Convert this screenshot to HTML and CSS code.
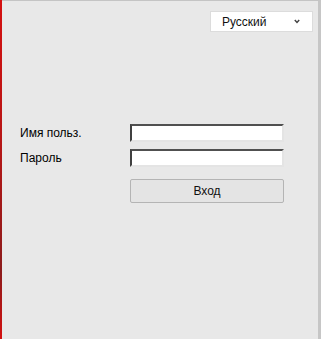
FILE: index.html
```html
<!DOCTYPE html>
<html lang="ru">
<head>
    <meta charset="UTF-8">
    <meta name="viewport" content="width=device-width, initial-scale=1.0">
    <title>Вход</title>
    <link rel="stylesheet" href="styles.css">
</head>
<body>
    <div class="frame">
        <div class="edge"></div>
        <div class="page">
            <div class="lang-bar">
                <div class="lang-select">
                    <span>Русский</span>
                    <svg class="chevron" width="6" height="5" viewBox="0 0 6 5">
                        <path d="M0.8 1 L3 3.4 L5.2 1" fill="none" stroke="#444" stroke-width="1.5"/>
                    </svg>
                </div>
            </div>

            <div class="login">
                <label for="user">Имя польз.</label>
                <input type="text" id="user" class="field">
                <label for="pass">Пароль</label>
                <input type="password" id="pass" class="field">
                <span></span>
                <button class="login-btn">Вход</button>
            </div>
        </div>
    </div>
</body>
</html>
```

FILE: styles.css
```css
body {
    margin: 0;
    font-family: 'Liberation Sans', Arial, sans-serif;
    font-size: 12px;
    color: #000;
    background: #e8e8e8;
}
.frame {
    display: flex;
    height: 339px;
}
.edge {
    width: 2px;
    background: linear-gradient(to bottom, #d41010 0%, #b81616 40%, #8c1c1c 80%, #d41010 100%);
}
.page {
    flex: 1;
    background: #e8e8e8;
    border-top: 1px solid #c4c4c4;
    border-right: 3px solid #c6c6c6;
}
.lang-bar {
    display: flex;
    justify-content: flex-end;
    padding: 10px 5px 0 0;
}
.lang-select {
    width: 103px;
    height: 21px;
    box-sizing: border-box;
    background: white;
    border: 1px solid #dcdcdc;
    display: flex;
    align-items: center;
    justify-content: space-between;
    padding: 0 12px 0 11px;
    font-size: 12px;
    color: #111;
}
.chevron {
    display: block;
}
.login {
    display: grid;
    grid-template-columns: 110px 154px;
    row-gap: 7px;
    align-items: center;
    margin: 92px 0 0 18px;
}
.login label {
    font-size: 12px;
}
.field {
    height: 18px;
    box-sizing: border-box;
    margin: 0;
    padding: 0 2px;
    background: white;
    border-style: solid;
    border-width: 2px;
    border-color: #505050 #e4e4e4 #e4e4e4 #404040;
}
.login-btn {
    margin-top: 5px;
    height: 24px;
    background: #e4e4e4;
    border: 1px solid #b4b4b4;
    border-radius: 2px;
    font-family: inherit;
    font-size: 12px;
    color: #111;
}
```
